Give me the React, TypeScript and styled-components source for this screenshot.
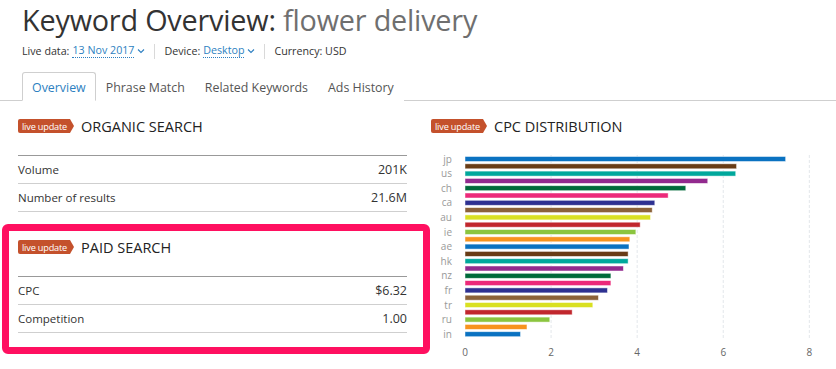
import React from "react";
import styled, { createGlobalStyle } from "styled-components";

const GlobalStyle = createGlobalStyle`
  body {
    margin: 0;
    background: #fff;
    font-family: "Open Sans", "Noto Sans", sans-serif;
    color: #333;
  }
`;

const Page = styled.div`
  width: 836px;
  height: 369px;
  overflow: hidden;
`;

const Header = styled.header`
  padding: 2px 0 0 22px;
`;

const Title = styled.h1`
  margin: 0;
  font-size: 28.8px;
  font-weight: 400;
  line-height: 36px;
  color: #333;
  letter-spacing: -0.2px;
`;

const Phrase = styled.span`
  color: #6f6f6f;
`;

const Meta = styled.div`
  display: flex;
  align-items: center;
  margin-top: 4px;
  font-size: 10.7px;
  height: 18px;
`;

const MetaItem = styled.div`
  display: flex;
  align-items: center;
  gap: 3px;
`;

const Divider = styled.span`
  width: 1px;
  height: 15px;
  background: #d9d9d9;
  margin: 0 9px;
`;

const Picker = styled.span`
  color: #2d7fc1;
  border-bottom: 1px dotted #2d7fc1;
  line-height: 13px;
`;

const Chevron = () => (
  <svg width="8" height="6" viewBox="0 0 8 6">
    <path d="M1 1.5l3 3 3-3" fill="none" stroke="#2d7fc1" strokeWidth="1.1" />
  </svg>
);

const Tabs = styled.nav`
  display: flex;
  margin-top: 12px;
  padding-left: 22px;
  border-bottom: 1px solid #cfcfcf;
  height: 28px;
`;

const Tab = styled.div<{ $active?: boolean }>`
  display: flex;
  align-items: center;
  padding: 1px 9px 0;
  margin-bottom: -1px;
  font-size: 12.4px;
  color: ${(p) => (p.$active ? "#2d7fc1" : "#555")};
  background: #fff;
  border: 1px solid ${(p) => (p.$active ? "#cfcfcf" : "transparent")};
  border-bottom-color: ${(p) => (p.$active ? "#fff" : "transparent")};
  border-radius: 3px 3px 0 0;
`;

const Content = styled.main`
  display: flex;
  padding: 17px 0 0 18px;
`;

const LeftColumn = styled.div`
  width: 389px;
  display: flex;
  flex-direction: column;
`;

const RightColumn = styled.div`
  margin-left: 24px;
  flex: 1;
`;

const SectionHead = styled.div`
  display: flex;
  align-items: center;
  gap: 7px;
  height: 16px;
`;

const Badge = styled.span`
  position: relative;
  display: inline-flex;
  align-items: center;
  height: 14px;
  padding: 0 3px 0 4px;
  background: #c4512c;
  color: #fff;
  font-size: 9.2px;
  letter-spacing: -0.2px;
  border-radius: 2px 0 0 2px;
  margin-right: 4px;

  &::after {
    content: "";
    position: absolute;
    right: -4px;
    top: 0;
    border-left: 4px solid #c4512c;
    border-top: 7px solid transparent;
    border-bottom: 7px solid transparent;
  }
`;

const SectionTitle = styled.h2`
  margin: 0;
  font-size: 14.5px;
  font-weight: 400;
  color: #222;
`;

const Table = styled.div`
  margin-top: 21px;
  border-top: 1px solid #999;
`;

const Row = styled.div`
  display: flex;
  justify-content: space-between;
  align-items: center;
  height: 27px;
  border-bottom: 1px solid #cfcfcf;
  font-size: 11.5px;
  color: #333;
`;

const Value = styled.span`
  font-size: 12.5px;
  color: #333;
`;

const Highlight = styled.div`
  box-sizing: border-box;
  margin: 12px 0 0 -16px;
  width: 428px;
  border: 7px solid #ff1060;
  border-radius: 6px;
  padding: 8px 0 14px 9px;
`;

const HighlightInner = styled.div`
  width: 389px;
`;

type Stat = { label: string; value: string };

const Section = ({ title, stats }: { title: string; stats: Stat[] }) => (
  <div>
    <SectionHead>
      <Badge>live update</Badge>
      <SectionTitle>{title}</SectionTitle>
    </SectionHead>
    <Table>
      {stats.map((s) => (
        <Row key={s.label}>
          <span>{s.label}</span>
          <Value>{s.value}</Value>
        </Row>
      ))}
    </Table>
  </div>
);

const palette = [
  "#0a72c1",
  "#683c16",
  "#00a89c",
  "#922a8e",
  "#006a3a",
  "#ec2a7a",
  "#2e3191",
  "#8b6239",
  "#d9e021",
  "#c1272d",
  "#8bc53f",
  "#f7931e",
];

const values = [
  7.45, 6.31, 6.29, 5.64, 5.13, 4.72, 4.41, 4.35, 4.31, 4.07, 3.97, 3.83, 3.81,
  3.79, 3.79, 3.68, 3.39, 3.39, 3.31, 3.1, 2.97, 2.49, 1.97, 1.44, 1.29,
];

const countries = ["jp", "us", "ch", "ca", "au", "ie", "ae", "hk", "nz", "fr", "tr", "ru", "in"];

const ChartWrap = styled.div`
  margin-top: 14px;
  margin-left: -4px;
`;

const X0 = 38;
const UNIT = 43.04;
const TOP = 11;
const STEP = 7.3;

const CpcChart = () => (
  <svg width="405" height="220" viewBox="0 0 405 220">
    {[2, 4, 6, 8].map((t) => (
      <line
        key={t}
        x1={X0 + t * UNIT}
        x2={X0 + t * UNIT}
        y1={7}
        y2={190}
        stroke="#e3e7eb"
        strokeDasharray="3 2"
      />
    ))}
    {values.map((v, i) => (
      <rect
        key={i}
        x={X0}
        y={TOP + i * STEP - 2.5}
        width={v * UNIT}
        height={5}
        fill={palette[i % palette.length]}
        stroke="#fff"
        strokeOpacity={0.6}
        strokeWidth={0.8}
      />
    ))}
    {countries.map((c, i) => (
      <text
        key={c}
        x={25}
        y={TOP + i * 2 * STEP + 3.5}
        textAnchor="end"
        fontSize="10"
        fill="#999"
        fontFamily="Open Sans, sans-serif"
      >
        {c}
      </text>
    ))}
    {[0, 2, 4, 6, 8].map((t) => (
      <text
        key={t}
        x={X0 + t * UNIT}
        y={208}
        textAnchor="middle"
        fontSize="10"
        fill="#666"
        fontFamily="Open Sans, sans-serif"
      >
        {t}
      </text>
    ))}
  </svg>
);

export default function App() {
  return (
    <Page>
      <GlobalStyle />
      <Header>
        <Title>
          Keyword Overview: <Phrase>flower delivery</Phrase>
        </Title>
        <Meta>
          <MetaItem>
            Live data: <Picker>13 Nov 2017</Picker>
            <Chevron />
          </MetaItem>
          <Divider />
          <MetaItem>
            Device: <Picker>Desktop</Picker>
            <Chevron />
          </MetaItem>
          <Divider />
          <MetaItem>Currency: USD</MetaItem>
        </Meta>
      </Header>
      <Tabs>
        <Tab $active>Overview</Tab>
        <Tab>Phrase Match</Tab>
        <Tab>Related Keywords</Tab>
        <Tab>Ads History</Tab>
      </Tabs>
      <Content>
        <LeftColumn>
          <Section
            title="ORGANIC SEARCH"
            stats={[
              { label: "Volume", value: "201K" },
              { label: "Number of results", value: "21.6M" },
            ]}
          />
          <Highlight>
            <HighlightInner>
              <Section
                title="PAID SEARCH"
                stats={[
                  { label: "CPC", value: "$6.32" },
                  { label: "Competition", value: "1.00" },
                ]}
              />
            </HighlightInner>
          </Highlight>
        </LeftColumn>
        <RightColumn>
          <SectionHead>
            <Badge>live update</Badge>
            <SectionTitle>CPC DISTRIBUTION</SectionTitle>
          </SectionHead>
          <ChartWrap>
            <CpcChart />
          </ChartWrap>
        </RightColumn>
      </Content>
    </Page>
  );
}
